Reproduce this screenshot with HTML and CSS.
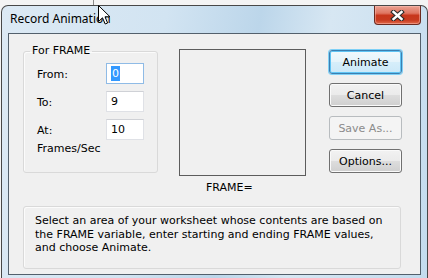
FILE: index.html
```html
<!DOCTYPE html>
<html lang="en">

<head>
    <meta charset="UTF-8">
    <meta name="viewport" content="width=device-width, initial-scale=1.0">
    <title>Record Animation</title>

    <link rel="stylesheet" href="styles.css">
</head>

<body>

    <div class="backdrop"><span class="backdrop-line"></span></div>

    <div class="window">
        <div class="titlebar">
            <span class="title">Record Animation</span>
            <button class="close-button" type="button" aria-label="Close">
                <svg width="15" height="11" viewBox="0 0 15 11">
                    <path d="M3.5 2 L11.5 9 M11.5 2 L3.5 9" stroke="#2b2b2b" stroke-width="4.6" stroke-linecap="square" />
                    <path d="M3.5 2 L11.5 9 M11.5 2 L3.5 9" stroke="#ffffff" stroke-width="2.4" stroke-linecap="square" />
                </svg>
            </button>
        </div>

        <div class="client">
            <div class="top-row">
                <!-- Frame range -->
                <fieldset class="group frame-group">
                    <legend>For FRAME</legend>
                    <div class="field-row first">
                        <span class="field-label">From:</span>
                        <span class="field focused"><span class="selected">0</span></span>
                    </div>
                    <div class="field-row">
                        <span class="field-label">To:</span>
                        <span class="field">9</span>
                    </div>
                    <div class="field-row">
                        <span class="field-label">At:</span>
                        <span class="field">10</span>
                    </div>
                    <div class="unit-label">Frames/Sec</div>
                </fieldset>

                <!-- Preview of the frame value -->
                <div class="preview-column">
                    <div class="preview"></div>
                    <div class="preview-label">FRAME=</div>
                </div>

                <!-- Dialog actions -->
                <div class="actions">
                    <button class="dialog-button default" type="button">Animate</button>
                    <button class="dialog-button" type="button">Cancel</button>
                    <button class="dialog-button" type="button" disabled>Save As...</button>
                    <button class="dialog-button" type="button">Options...</button>
                </div>
            </div>

            <div class="group help-group">
                <p class="help-text">Select an area of your worksheet whose contents are based on the FRAME variable, enter starting and ending FRAME values, and choose Animate.</p>
            </div>
        </div>
    </div>

    <svg class="cursor" width="13" height="21" viewBox="0 0 13 21">
        <path d="M0.5 0.5 L0.5 16.5 L4.5 12.8 L7.2 19 L9.6 18 L7 11.8 L12 11.8 Z" fill="#ffffff" stroke="#000000" stroke-width="1" stroke-linejoin="miter" />
    </svg>

</body>

</html>
```

FILE: styles.css
```css
/* Page behind the dialog */
body {
    margin: 0;
    background-color: #f4f4f4;
    font-family: "DejaVu Sans", Verdana, sans-serif;
    font-size: 11px;
    color: #000;
    overflow: hidden;
}

.backdrop {
    height: 5px;
}

.backdrop-line {
    display: block;
    margin-left: 93px;
    width: 1px;
    height: 5px;
    background-color: #8a8a8a;
}

/* Window frame */
.window {
    width: 427px;
    margin-left: 1px;
    border: 1px solid #484848;
    border-bottom: none;
    border-radius: 7px 7px 0 0;
    padding: 0 6px 6px 6px;
    box-sizing: border-box;
    background: linear-gradient(100deg, #dce9f4 0%, #d2e4f2 35%, #bcd6ea 55%, #d7e7f3 70%, #c3dbee 100%);
}

.titlebar {
    height: 27px;
    display: flex;
    justify-content: space-between;
    align-items: flex-start;
}

.title {
    font-family: "Noto Sans", sans-serif;
    font-size: 12px;
    line-height: 16px;
    padding-top: 5px;
    padding-left: 2px;
    color: #000;
}

.close-button {
    width: 47px;
    height: 19px;
    margin: 0;
    padding: 0;
    border: 1px solid #6b2a20;
    border-top: none;
    border-radius: 0 0 4px 4px;
    background: linear-gradient(#eba293 0%, #df7561 40%, #c8361c 52%, #c73a1f 78%, #e2694a 100%);
    box-shadow: inset 0 0 0 1px rgba(255, 200, 190, 0.45);
    display: flex;
    align-items: center;
    justify-content: center;
}

.close-button svg {
    display: block;
}

/* Client area */
.client {
    border: 1px solid #53606c;
    background-color: #f0f0f0;
    padding: 10px 0 5px 14px;
}

.top-row {
    display: flex;
    align-items: flex-start;
}

.group {
    border: 1px solid #d9d9d9;
    border-radius: 3px;
    box-shadow: inset 1px 1px 0 #fbfbfb;
}

/* Frame group */
.frame-group {
    width: 135px;
    box-sizing: border-box;
    margin: 0;
    padding: 0 0 16px 13px;
    min-width: 0;
}

.frame-group legend {
    padding: 0 2px;
    margin-left: -7px;
    line-height: 14px;
}

.field-row {
    display: flex;
    align-items: center;
    height: 21px;
    margin-top: 7px;
}

.field-row.first {
    margin-top: 5px;
}

.field-label {
    width: 69px;
    padding-top: 2px;
}

.field {
    width: 38px;
    height: 21px;
    box-sizing: border-box;
    border: 1px solid #dfe1e6;
    border-top-color: #cfd1d6;
    background-color: #fff;
    padding-left: 4px;
    line-height: 19px;
}

.field.focused {
    border-color: #8fbbe6;
}

.selected {
    background-color: #3399ff;
    color: #fff;
    padding: 1px 1px;
}

.unit-label {
    margin-top: 2px;
    line-height: 14px;
}

/* Preview */
.preview-column {
    margin-left: 21px;
    margin-top: 5px;
}

.preview {
    width: 127px;
    height: 127px;
    box-sizing: border-box;
    border: 1px solid #5c5c5c;
}

.preview-label {
    margin: 5px 0 0 27px;
    line-height: 14px;
}

/* Buttons */
.actions {
    display: flex;
    flex-direction: column;
    gap: 9px;
    margin-left: 23px;
    margin-top: 6px;
}

.dialog-button {
    width: 73px;
    height: 24px;
    margin: 0;
    padding: 0;
    border: 1px solid #707070;
    border-radius: 3px;
    font-family: "DejaVu Sans", Verdana, sans-serif;
    font-size: 11px;
    color: #000;
    background: linear-gradient(#f2f2f2 0%, #ebebeb 48%, #dddddd 52%, #cfcfcf 100%);
    box-shadow: inset 0 0 0 1px #fafafa;
}

.dialog-button.default {
    border-color: #3c7fb1;
    background: linear-gradient(#f1f9fd 0%, #e6f4fb 48%, #d6eefa 52%, #cbe8f8 100%);
    box-shadow: 0 0 0 1px #7fd0f6, inset 0 0 0 1px #5fc4f4;
}

.dialog-button:disabled {
    border-color: #b8bcbf;
    background: #f4f4f4;
    color: #8b8b8b;
    box-shadow: none;
}

/* Help text */
.help-group {
    width: 378px;
    height: 63px;
    box-sizing: border-box;
    margin-top: 11px;
    padding: 7px 13px 0 11px;
}

.help-text {
    margin: 0;
    line-height: 13.5px;
}

/* Mouse pointer over the title */
.cursor {
    position: absolute;
    left: 98px;
    top: 5px;
}
```
